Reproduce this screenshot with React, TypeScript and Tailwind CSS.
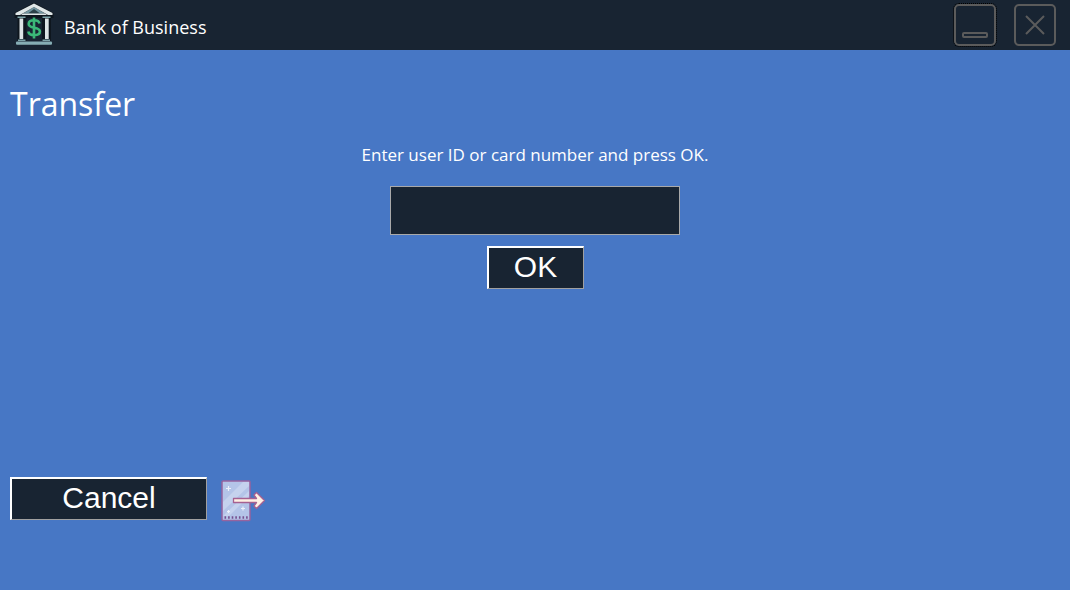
import type { ReactNode } from "react";

function BankLogo() {
  return (
    <svg className="h-[42px] w-10 shrink-0" viewBox="0 0 40 42" aria-hidden="true">
      <path d="M.5 10 20-.5 39.500 10v5H.5ZM3.500 14h9v24h-9ZM28 14h9v24h-9Z" fill="#0e161e" />
      <path d="M9 10.500 20 4l11 6.500Z" fill="#7195a0" />
      <path d="M14 10.500 20 6l6 4.500Z" fill="#2c4149" />
      <path d="M1.500 10 20 .5 38.500 10v2H34L20 4 6 12H1.500Z" fill="#dfe6e7" />
      <path d="M9 10.500h22l2 1.500H7Z" fill="#dfe6e7" />
      <path d="M3.500 13.500h8V15h-8ZM28.500 13.500h8V15h-8Z" fill="#7fa5ab" />
      <path d="M5.500 15.500h3.700v20.500H5.500ZM31 15.500h3.700v20.500H31Z" fill="#dde4e5" />
      <path d="M4 36.500h7.500V38H4ZM28.500 36.500H36V38h-7.500Z" fill="#7fa5ab" />
      <rect x="2" y="38.500" width="36" height="3.200" rx="1" fill="#86aeb5" />
      <path
        d="M25.500 20.500c-.4-2-2.400-3.200-5.400-3.200-3.200 0-5.400 1.300-5.400 3.600 0 5.200 11.200 2.500 11.200 7.600 0 2.300-2.400 3.600-5.700 3.600-3.300 0-5.500-1.400-5.900-3.600M20 14.500v21"
        fill="none"
        stroke="#3bb878"
        strokeWidth="2.600"
      />
    </svg>
  );
}

function ExitIcon() {
  return (
    <svg className="h-[42px] w-11 shrink-0" viewBox="0 0 44 42" aria-hidden="true">
      <rect x="1" y="1" width="28" height="39.500" rx="1" fill="#b4c4e8" stroke="#96639f" strokeWidth="1.500" />
      <path d="M2 22 22 2h6v4L2 31ZM2 36 28 11v5L8 36Z" fill="#c5d2ee" />
      <path d="M3.500 37.500h24" stroke="#77508f" strokeWidth="2.500" strokeDasharray="1.600 2" />
      <path d="M7.500 6v5M5 8.500h5M22 26.500v4M20 28.500h4M7.500 30v3M6 31.500h3" stroke="#edf1fb" strokeWidth="1.200" />
      <path
        d="M12.500 18.500h23l-2.500-3.500 2.500-2.500 8 8-8 8-2.500-2.500 2.500-3.500h-23Z"
        fill="#fff0e4"
        stroke="#a66191"
        strokeWidth="1.300"
        strokeLinejoin="round"
      />
    </svg>
  );
}

function WindowButton({ label, className = "", children }: { label: string; className?: string; children: ReactNode }) {
  return (
    <button
      type="button"
      aria-label={label}
      className={`size-[42px] rounded-[5px] border-2 border-[#5b5b5b] text-[#5b5b5b] ${className}`}
    >
      <svg className="size-full" viewBox="0 0 38 38" fill="none" stroke="currentColor" strokeWidth="2" aria-hidden="true">
        {children}
      </svg>
    </button>
  );
}

const bevel =
  "h-[43px] border-t-2 border-l-2 border-r border-b border-t-white border-l-white border-r-[#a0a0a0] border-b-[#a0a0a0] bg-[#182432] pb-0.5 text-center font-['Liberation_Sans',Arial,sans-serif] text-[30px] leading-9 text-white";

export default function App() {
  return (
    <div className="flex min-h-screen flex-col bg-[#4777c5] font-['Open_Sans','Noto_Sans',sans-serif] text-white">
      <header className="flex h-[50px] items-center justify-between bg-[#182432] px-3.5">
        <div className="flex items-center gap-2.5">
          <div className="pb-0.5">
            <BankLogo />
          </div>
          <span className="pt-1 text-lg leading-6">Bank of Business</span>
        </div>
        <div className="flex gap-[18px]">
          <WindowButton label="Minimize" className="outline-1 outline-dotted outline-black">
            <rect x="7" y="27" width="24" height="4" rx="1" />
          </WindowButton>
          <WindowButton label="Close">
            <path d="m10 10 18 18M28 10 10 28" />
          </WindowButton>
        </div>
      </header>

      <main className="flex grow flex-col px-2.5 pt-8 pb-[68px]">
        <h1 className="text-[32px] leading-11">Transfer</h1>
        <form className="flex flex-col items-center pt-[17px]" onSubmit={(event) => event.preventDefault()}>
          <label htmlFor="account" className="text-[17px] leading-6">
            Enter user ID or card number and press OK.
          </label>
          <input
            id="account"
            type="text"
            className="mt-[19px] h-[49px] w-[290px] border border-[#a9a9a9] bg-[#182432] px-2 text-2xl text-white outline-none"
          />
          <button type="submit" className={`mt-[11px] w-[97px] ${bevel}`}>
            OK
          </button>
        </form>
        <div className="mt-auto flex items-start gap-3.5">
          <button type="button" className={`w-[197px] ${bevel}`}>
            Cancel
          </button>
          <div className="pt-[3px]">
            <ExitIcon />
          </div>
        </div>
      </main>
    </div>
  );
}
